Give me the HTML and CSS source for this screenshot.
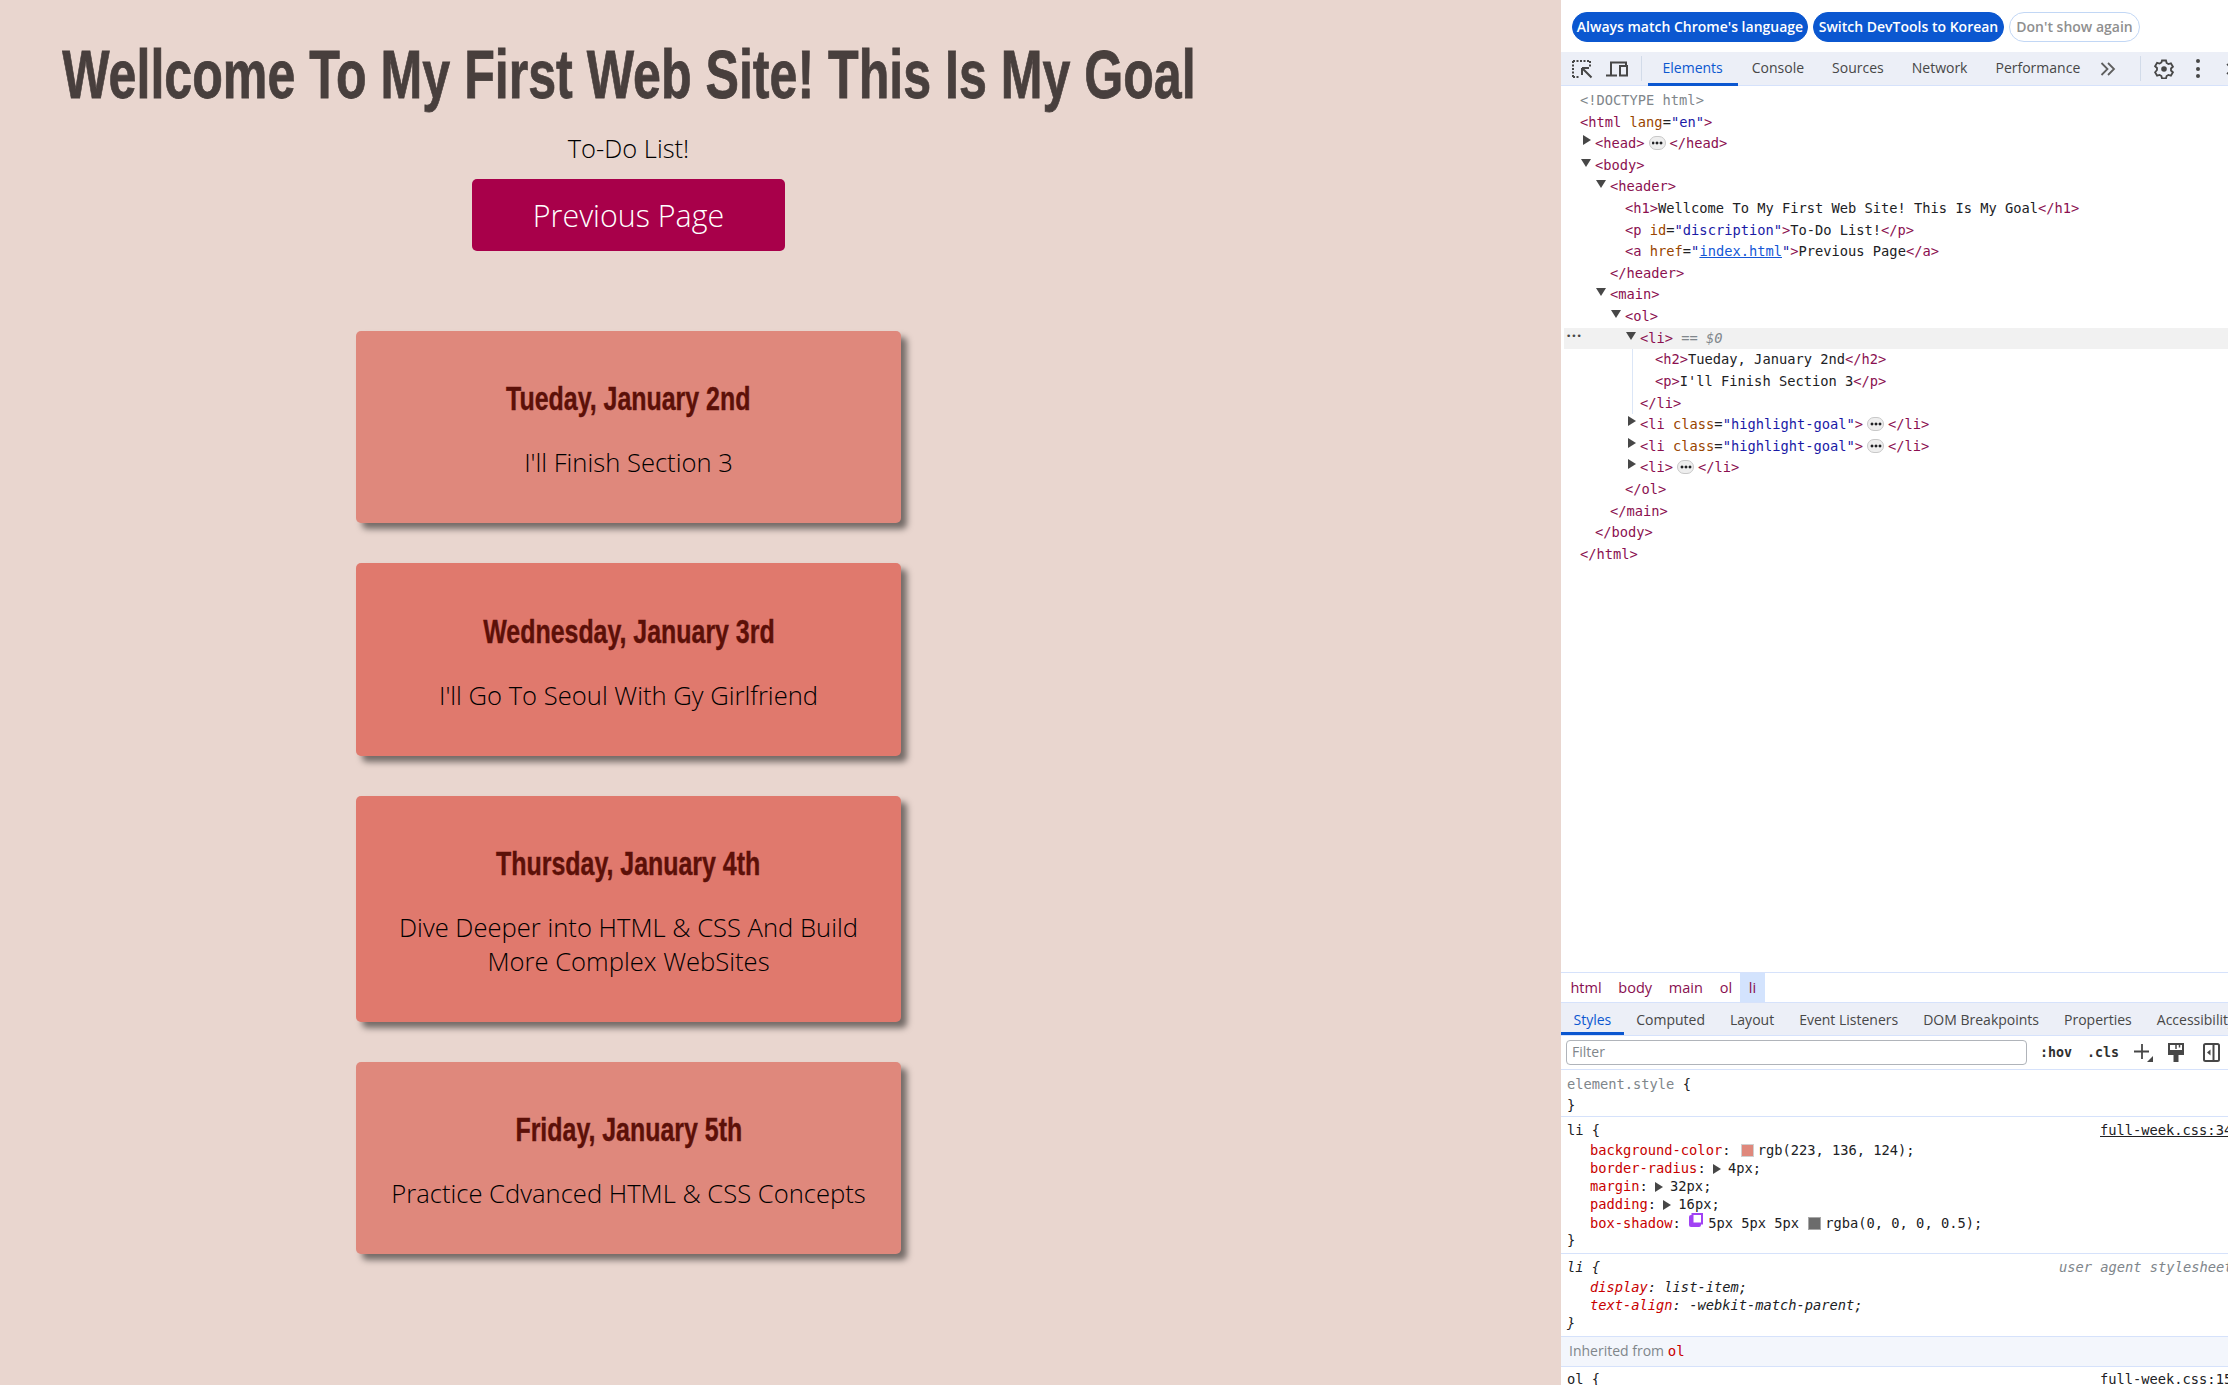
FILE: index.html
```html
<!DOCTYPE html>
<html lang="en">
<head>
<meta charset="utf-8">
<title>Full Week</title>
<link rel="stylesheet" href="styles.css">
</head>
<body>
<div class="app">
  <div class="page">
    <header class="site-header">
      <h1><span class="cond">Wellcome To My First Web Site! This Is My Goal</span></h1>
      <p class="discription">To-Do List!</p>
      <a class="prev" href="#">Previous Page</a>
    </header>
    <main>
      <ol class="goals">
        <li class="goal"><h2><span class="cond">Tueday, January 2nd</span></h2><p>I'll Finish Section 3</p></li>
        <li class="goal highlight"><h2><span class="cond">Wednesday, January 3rd</span></h2><p>I'll Go To Seoul With Gy Girlfriend</p></li>
        <li class="goal highlight"><h2><span class="cond">Thursday, January 4th</span></h2><p>Dive Deeper into HTML &amp; CSS And Build More Complex WebSites</p></li>
        <li class="goal"><h2><span class="cond">Friday, January 5th</span></h2><p>Practice Cdvanced HTML &amp; CSS Concepts</p></li>
      </ol>
    </main>
  </div>

  <aside class="devtools">
    <div class="infobar">
      <button class="pill primary">Always match Chrome's language</button>
      <button class="pill primary">Switch DevTools to Korean</button>
      <button class="pill ghost">Don't show again</button>
    </div>

    <nav class="toolbar">
      <span class="tool-icon">
        <svg width="22" height="20" viewBox="0 0 22 20" fill="none" stroke="#474747"><path d="M2 2h17M2 2v16M2 18h6M19 2v6" stroke-width="2" stroke-dasharray="2 1.500"/><path d="M11 9h7M11 9v7M11.500 9.500l9 9" stroke-width="2"/></svg>
      </span>
      <span class="tool-icon">
        <svg width="22" height="16" viewBox="0 0 22 16" fill="none" stroke="#474747" stroke-width="2"><path d="M5 14.500V1.500h15v2.500M0 14.500h11"/><rect x="14" y="5" width="7" height="9.500"/></svg>
      </span>
      <span class="divider first"></span>
      <span class="tab active">Elements</span>
      <span class="tab">Console</span>
      <span class="tab">Sources</span>
      <span class="tab">Network</span>
      <span class="tab">Performance</span>
      <span class="more">
        <svg width="16" height="14" viewBox="0 0 16 14" fill="none" stroke="#5f5f5f" stroke-width="1.800"><path d="M1.500 1l6 6-6 6M8 1l6 6-6 6"/></svg>
      </span>
      <span class="divider second"></span>
      <span class="gear">
        <svg width="20" height="20" viewBox="0 0 20 20" fill="none" stroke="#474747" stroke-width="1.800"><path d="M8 1.500h4l.6 2.500 1.800 1 2.500-.7 2 3.400-1.900 1.800v2l1.900 1.800-2 3.400-2.500-.7-1.800 1-.6 2.500H8l-.6-2.500-1.800-1-2.500.7-2-3.400L3 11V9L1.100 7.200l2-3.400 2.500.7 1.800-1z"/><circle cx="10" cy="10" r="2.800" fill="#474747" stroke="none"/></svg>
      </span>
      <span class="kebab"><i></i><i></i><i></i></span>
      <span class="close-stub">
        <svg width="14" height="14" viewBox="0 0 14 14" stroke="#474747" stroke-width="1.700"><path d="M2 2l10 10M12 2L2 12"/></svg>
      </span>
    </nav>

    <section class="tree">
      <div class="row d0"><span class="c-doc">&lt;!DOCTYPE html&gt;</span></div>
      <div class="row d0"><span class="t">&lt;html</span> <span class="a">lang</span>=<span class="v">"en"</span><span class="t">&gt;</span></div>
      <div class="row d1"><i class="tri right"></i><span class="t">&lt;head&gt;</span><i class="ell"></i><span class="t">&lt;/head&gt;</span></div>
      <div class="row d1"><i class="tri down"></i><span class="t">&lt;body&gt;</span></div>
      <div class="row d2"><i class="tri down"></i><span class="t">&lt;header&gt;</span></div>
      <div class="row d3"><span class="t">&lt;h1&gt;</span>Wellcome To My First Web Site! This Is My Goal<span class="t">&lt;/h1&gt;</span></div>
      <div class="row d3"><span class="t">&lt;p</span> <span class="a">id</span>=<span class="v">"discription"</span><span class="t">&gt;</span>To-Do List!<span class="t">&lt;/p&gt;</span></div>
      <div class="row d3"><span class="t">&lt;a</span> <span class="a">href</span>=<span class="v">"<u class="link">index.html</u>"</span><span class="t">&gt;</span>Previous Page<span class="t">&lt;/a&gt;</span></div>
      <div class="row d2"><span class="t">&lt;/header&gt;</span></div>
      <div class="row d2"><i class="tri down"></i><span class="t">&lt;main&gt;</span></div>
      <div class="row d3"><i class="tri down"></i><span class="t">&lt;ol&gt;</span></div>
      <div class="row d4 selected"><span class="sel-dots">&#8226;&#8226;&#8226;</span><i class="tri down"></i><span class="t">&lt;li&gt;</span> <span class="eq">== <em>$0</em></span></div>
      <div class="row d5 guide"><span class="t">&lt;h2&gt;</span>Tueday, January 2nd<span class="t">&lt;/h2&gt;</span></div>
      <div class="row d5 guide"><span class="t">&lt;p&gt;</span>I'll Finish Section 3<span class="t">&lt;/p&gt;</span></div>
      <div class="row d4 guide"><span class="t">&lt;/li&gt;</span></div>
      <div class="row d4"><i class="tri right"></i><span class="t">&lt;li</span> <span class="a">class</span>=<span class="v">"highlight-goal"</span><span class="t">&gt;</span><i class="ell"></i><span class="t">&lt;/li&gt;</span></div>
      <div class="row d4"><i class="tri right"></i><span class="t">&lt;li</span> <span class="a">class</span>=<span class="v">"highlight-goal"</span><span class="t">&gt;</span><i class="ell"></i><span class="t">&lt;/li&gt;</span></div>
      <div class="row d4"><i class="tri right"></i><span class="t">&lt;li&gt;</span><i class="ell"></i><span class="t">&lt;/li&gt;</span></div>
      <div class="row d3"><span class="t">&lt;/ol&gt;</span></div>
      <div class="row d2"><span class="t">&lt;/main&gt;</span></div>
      <div class="row d1"><span class="t">&lt;/body&gt;</span></div>
      <div class="row d0"><span class="t">&lt;/html&gt;</span></div>
    </section>

    <div class="crumbs">
      <span class="crumb">html</span><span class="crumb">body</span><span class="crumb">main</span><span class="crumb">ol</span><span class="crumb on">li</span>
    </div>

    <nav class="subtabs">
      <span class="subtab active">Styles</span>
      <span class="subtab">Computed</span>
      <span class="subtab">Layout</span>
      <span class="subtab">Event Listeners</span>
      <span class="subtab">DOM Breakpoints</span>
      <span class="subtab">Properties</span>
      <span class="subtab">Accessibility</span>
    </nav>

    <div class="filterbar">
      <div class="filter">Filter</div>
      <span class="pseudo">:hov</span>
      <span class="pseudo">.cls</span>
      <svg class="plus" width="20" height="20" viewBox="0 0 20 20" fill="none" stroke="#474747" stroke-width="1.800"><path d="M8 1v15M0 8.500h15"/><path d="M19 13v6h-6z" fill="#474747" stroke="none"/></svg>
      <svg class="paint" width="16" height="20" viewBox="0 0 16 20" fill="none" stroke="#474747" stroke-width="2"><path d="M1 1h14v10H1z"/><path d="M1 8.500h14" stroke-width="3"/><path d="M8 1v5M11.500 1v3.500" stroke-width="1.500"/><path d="M5.500 11h5v8h-5z" fill="#474747" stroke="none"/></svg>
      <svg class="panel" width="17" height="19" viewBox="0 0 17 19" fill="none" stroke="#474747" stroke-width="2"><rect x="1" y="1" width="15" height="17" rx="1.500"/><path d="M10.500 1v17"/><path d="M7.500 6.500v6L4 9.500z" fill="#474747" stroke="none"/></svg>
    </div>

    <section class="rules">
      <div class="rule r-element">
        <div class="sel dim">element.style <span class="brace">{</span></div>
        <div class="sel">}</div>
      </div>
      <div class="rule r-li">
        <div class="sel split"><span>li <span class="brace">{</span></span><u class="src">full-week.css:34</u></div>
        <div class="decl"><span class="p">background-color</span>: <i class="swatch coral"></i>rgb(223, 136, 124);</div>
        <div class="decl"><span class="p">border-radius</span>: <i class="tri right inl"></i>4px;</div>
        <div class="decl"><span class="p">margin</span>: <i class="tri right inl"></i>32px;</div>
        <div class="decl"><span class="p">padding</span>: <i class="tri right inl"></i>16px;</div>
        <div class="decl"><span class="p">box-shadow</span>: <svg class="shadow-ico" width="14" height="14" viewBox="0 0 14 14"><rect x="0" y="2" width="12" height="12" rx="2" fill="#a142f4"/><rect x="3.500" y="1" width="9.500" height="9.500" fill="#fff" stroke="#a142f4" stroke-width="2"/></svg>5px 5px 5px <i class="swatch grey"></i>rgba(0, 0, 0, 0.5);</div>
        <div class="sel">}</div>
      </div>
      <div class="rule r-ua">
        <div class="sel split it"><span>li <span class="brace">{</span></span><span class="ua">user agent stylesheet</span></div>
        <div class="decl it"><span class="p">display</span>: list-item;</div>
        <div class="decl it"><span class="p">text-align</span>: -webkit-match-parent;</div>
        <div class="sel it">}</div>
      </div>
      <div class="inherited">Inherited from <span class="from">ol</span></div>
      <div class="sel split last"><span>ol <span class="brace">{</span></span><u class="src">full-week.css:15</u></div>
    </section>
  </aside>
</div>
</body>
</html>
```
FILE: styles.css
```css
* { box-sizing: border-box; }
html, body { margin: 0; height: 100%; overflow: hidden; }
body { background: #e9d6cf; font-family: "Open Sans", sans-serif; color: #000; }
.app { display: flex; height: 1385px; width: 2228px; overflow: hidden; }

/* page */
.page { width: 1561px; flex: none; background: #e9d6cf; padding-right: 304px; overflow: hidden; }
.site-header { text-align: center; padding-top: 37px; }
.cond { display: inline-block; white-space: nowrap; flex: none; font-family: "Liberation Sans", sans-serif; font-weight: 700; }
h1 { margin: 0; display: flex; justify-content: center; font-size: 68px; line-height: 74px; color: #483f3d; }
h1 .cond { transform: scaleX(.737); -webkit-text-stroke: .8px #483f3d; }
.discription { margin: 0; font-size: 25.500px; font-weight: 300; line-height: 36px; padding-top: 19px; }
.prev { display: block; width: 313px; height: 72px; margin: 13px auto 0; background: #a8004a; color: #fff; border-radius: 5px; text-decoration: none; font-size: 30.400px; font-weight: 300; line-height: 74px; }
.goals { list-style: none; margin: 0; padding: 80px 0 0; display: flex; flex-direction: column; align-items: center; }
.goal { width: 545px; margin-bottom: 40px; padding: 20px; background: #df887c; border-radius: 5px; box-shadow: 6px 6px 6px rgba(0,0,0,.5); text-align: center; }
.goal.highlight { background: #e0796d; }
.goal h2 { margin: 28.300px 0 0; display: flex; justify-content: center; font-size: 32.500px; line-height: 40px; color: #5c1008; }
.goal h2 .cond { transform: scaleX(.767); -webkit-text-stroke: .4px #5c1008; }
.goal p { margin: 27px 0 23.600px; font-size: 25.600px; font-weight: 300; line-height: 33.500px; }

/* devtools shell */
.devtools { flex: 1; min-width: 0; background: #fff; overflow: hidden; font-family: "Open Sans", sans-serif; font-size: 14px; color: #474747; display: flex; flex-direction: column; }
.infobar { height: 52px; display: flex; align-items: center; gap: 5px; padding: 2px 0 0 11px; flex: none; }
.pill { height: 30px; border-radius: 15px; font: 600 14px/26px "Open Sans", sans-serif; padding: 0; border: 1px solid #0b57d0; white-space: nowrap; }
.pill.primary { background: #0b57d0; color: #fff; }
.pill.primary:nth-child(1) { width: 236px; }
.pill.primary:nth-child(2) { width: 191px; }
.pill.ghost { width: 131px; background: #fff; border-color: #c2d7f5; color: #8f8f8f; }

.toolbar { height: 34px; flex: none; display: flex; align-items: center; background: #eceff7; border-bottom: 1px solid #d6e2fb; padding-left: 3.500px; }
.tool-icon { width: 35px; display: flex; justify-content: center; flex: none; }
.divider { width: 1px; height: 25px; background: #d2dbe9; flex: none; }
.divider.first { margin: 0 6px 0 6px; }
.tab { height: 34px; line-height: 32px; padding: 0 14px; white-space: nowrap; flex: none; color: #474747; }
.tab.active { color: #0b57d0; border-bottom: 3px solid #0b57d0; padding: 0 15px; }
.more { width: 28px; display: flex; justify-content: center; flex: none; }
.divider.second { margin: 0 7px 0 18px; }
.gear { width: 32px; display: flex; justify-content: center; flex: none; }
.kebab { display: flex; flex-direction: column; gap: 3.500px; width: 36px; align-items: center; flex: none; }
.kebab i { width: 4px; height: 4px; border-radius: 50%; background: #474747; }
.close-stub { flex: none; padding-left: 9px; display: flex; }

/* elements tree */
.tree { flex: 1; min-height: 0; font-family: "DejaVu Sans Mono", monospace; font-size: 13.730px; color: #202124; padding-top: 4px; }
.row { height: 21.620px; line-height: 21.620px; position: relative; white-space: nowrap; }
.d0 { padding-left: 19px; }
.d1 { padding-left: 34px; }
.d2 { padding-left: 49px; }
.d3 { padding-left: 64px; }
.d4 { padding-left: 79px; }
.d5 { padding-left: 94px; }
.c-doc { color: #80868b; }
.t { color: #8b1050; }
.a { color: #994500; }
.v { color: #1a1aa6; }
.link { color: #1558d6; }
.eq { color: #80868b; }
.eq em { font-style: italic; }
.tri { position: absolute; width: 0; height: 0; border-style: solid; border-color: transparent; }
.tri.right { border-width: 5.500px 0 5.500px 8px; border-left-color: #474747; margin-left: -12.500px; margin-top: 2px; }
.tri.down { border-width: 8px 5px 0; border-top-color: #474747; margin-left: -14.500px; margin-top: 4px; }
.tri.inl { position: static; display: inline-block; margin: 0 7px 0 -1px; vertical-align: -1px; }
.ell { display: inline-block; width: 17px; height: 14px; margin: 0 4px; border: 1px solid #c8c8c8; border-radius: 7px; background: radial-gradient(circle, #202124 1.300px, transparent 1.700px) center / 4px 4px repeat-x content-box, #eeeeee; padding: 0 1.500px; vertical-align: -2px; }
.selected { background: #f1f1f1; margin-left: 3px; padding-left: 76px; }
.sel-dots { position: absolute; left: 2px; top: -2px; font-size: 9px; color: #474747; font-family: "DejaVu Sans", sans-serif; }
.guide::before { content: ""; position: absolute; left: 71px; top: 0; bottom: 0; width: 1px; background: #dbe6f7; }

/* breadcrumbs + sub tabs */
.crumbs { height: 30px; flex: none; display: flex; border-top: 1px solid #d6e2fb; padding-left: 1px; font-size: 14.500px; }
.crumb { padding: 0 8.400px; line-height: 29px; color: #880e4f; }
.crumb.on { background: #d3e3fd; }
.subtabs { height: 34px; flex: none; display: flex; background: #eceff7; border-top: 1px solid #d6e2fb; border-bottom: 1px solid #d6e2fb; overflow: hidden; white-space: nowrap; }
.subtab { padding: 0 12.500px; line-height: 33px; height: 32px; flex: none; }
.subtab.active { color: #0b57d0; border-bottom: 3px solid #0b57d0; }
.filterbar { height: 34px; flex: none; display: flex; align-items: center; border-bottom: 1px solid #d6e2fb; padding-left: 5px; }
.filter { width: 461px; height: 25px; border: 1px solid #b0b4ba; border-radius: 4px; line-height: 22px; padding-left: 5px; color: #80868b; flex: none; }
.pseudo { font-family: "DejaVu Sans Mono", monospace; font-weight: 700; font-size: 13.300px; color: #303030; flex: none; }
.pseudo:nth-of-type(1) { margin-left: 13px; }
.pseudo:nth-of-type(2) { margin-left: 15px; }
.plus { margin-left: 15px; flex: none; }
.paint { margin-left: 14px; flex: none; }
.panel { margin-left: 19px; flex: none; }

/* styles pane */
.rules { flex: none; height: 315px; font-family: "DejaVu Sans Mono", monospace; font-size: 13.730px; color: #202124; }
.rule { border-bottom: 1px solid #d6e2fb; padding-left: 6px; }
.sel, .decl { height: 18.100px; line-height: 18.100px; white-space: nowrap; position: relative; }
.decl { padding-left: 23px; }
.r-element { height: 47px; padding-top: 4px; }
.r-element .sel { height: 21px; line-height: 21px; }
.dim { color: #80868b; }
.brace { color: #202124; }
.r-li { height: 137px; padding-top: 3px; }
.r-li .sel:first-child { height: 21px; line-height: 21px; }
.r-ua { height: 83px; padding-top: 3px; }
.r-ua .sel:first-child { height: 21px; line-height: 21px; }
.split { display: flex; justify-content: space-between; }
.src { position: absolute; left: 533px; color: #202124; }
.last .src { left: 539px; }
.ua { position: absolute; left: 492px; color: #80868b; }
.it { font-style: italic; }
.p { color: #c80000; }
.swatch { display: inline-block; width: 13px; height: 13px; margin: 0 4px 0 2px; vertical-align: -2px; border: 1px solid #d0d0d0; }
.swatch.coral { background: #df887c; }
.swatch.grey { background: #6c6c6c; border-color: #a8a8a8; margin-left: 1px; }
.shadow-ico { margin: 0 5px 0 0; vertical-align: 1px; }
.inherited { height: 30px; line-height: 28px; background: #f3f6fc; border-bottom: 1px solid #d6e2fb; padding-left: 8px; font-family: "Open Sans", sans-serif; font-size: 14px; color: #80868b; }
.from { font-family: "DejaVu Sans Mono", monospace; color: #c80000; }
.last { padding-left: 6px; height: 24px; line-height: 24px; }
```
